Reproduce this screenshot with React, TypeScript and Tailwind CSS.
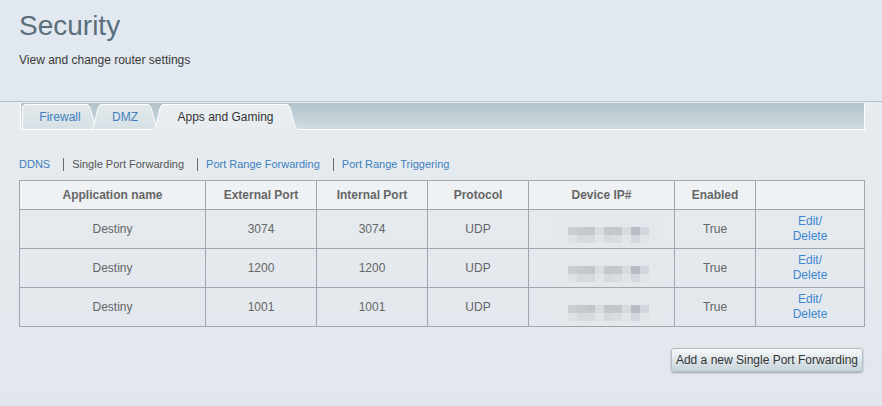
import React from "react";

type Rule = {
  app: string;
  ext: string;
  int: string;
  proto: string;
  enabled: string;
};

const rules: Rule[] = [
  { app: "Destiny", ext: "3074", int: "3074", proto: "UDP", enabled: "True" },
  { app: "Destiny", ext: "1200", int: "1200", proto: "UDP", enabled: "True" },
  { app: "Destiny", ext: "1001", int: "1001", proto: "UDP", enabled: "True" },
];

// masked address: two rows of mosaic blocks
const maskTop = ["#c9ced3", "#c5cacf", "#c2c7cc", "#d8dde2", "#c3c8cd", "#c3c8cd", "#d6dbe0", "#b8bcc2", "#d1d7dd"];
const maskBottom = ["#dde2e6", "#d5dadf", "#d5dadf", "#e0e5e9", "#d5dae0", "#d8dde2", "#e0e5e9", "#d3d8de", "#e0e5e9"];

function MaskedIp() {
  return (
    <div className="ml-[26px] mt-[9px] inline-flex flex-col bg-[#e3e8ec] px-[13px] pb-[4px] pt-[8px] align-top">
      <div className="flex">
        {maskTop.map((c, i) => (
          <div key={i} className="h-[8px] w-[9px]" style={{ backgroundColor: c }} />
        ))}
      </div>
      <div className="flex">
        {maskBottom.map((c, i) => (
          <div key={i} className="h-[8px] w-[9px]" style={{ backgroundColor: c }} />
        ))}
      </div>
    </div>
  );
}

type TabProps = {
  label: string;
  width: number;
  active?: boolean;
  first?: boolean;
  className?: string;
};

function Tab({ label, width, active, first, className }: TabProps) {
  const h = 25;
  const w = width;
  const d = first
    ? `M0.5,${h} L0.5,4 Q0.5,0.5 4,0.5 L${w - 11},0.5 C${w - 6},0.5 ${w - 5},${h} ${w},${h}`
    : `M0,${h} C5,${h} 5,0.5 10,0.5 L${w - 11},0.5 C${w - 6},0.5 ${w - 5},${h} ${w},${h}`;
  const gid = `tabfill-${label.replace(/\s/g, "")}`;
  return (
    <div
      className={`relative flex h-[25px] items-center justify-center ${active ? "z-10" : ""} ${className ?? ""}`}
      style={{ width }}
    >
      <svg className="absolute inset-0" width={w} height={h + 1} viewBox={`0 0 ${w} ${h + 1}`}>
        <defs>
          <linearGradient id={gid} x1="0" y1="0" x2="0" y2="1">
            <stop offset="0" stopColor={active ? "#e9eef1" : "#e2e9ec"} />
            <stop offset="1" stopColor={active ? "#e8edf1" : "#d6e0e4"} />
          </linearGradient>
        </defs>
        <path d={`${d} Z`} fill={`url(#${gid})`} />
        <path d={d} fill="none" stroke="#ffffff" strokeWidth="1" />
        {active && <rect x="0" y={h - 1} width={w} height="2" fill="#e8edf1" />}
      </svg>
      <span className={`relative text-[12px] ${active ? "text-[#333333]" : "text-[#3f7fbf]"}`}>
        {label}
      </span>
    </div>
  );
}

function Sep() {
  return <span className="mx-[8px] ml-[13px] inline-block h-[13px] w-px bg-[#6b6b6b]" />;
}

export default function App() {
  return (
    <div
      className="h-[406px] w-[882px] overflow-hidden bg-gradient-to-b from-[#e8edf1] to-[#e1e7ec]"
      style={{ fontFamily: '"Liberation Sans", Arial, sans-serif' }}
    >
      {/* page heading */}
      <div className="h-[102px] border-b border-[#b9c1c8] bg-[#e1e8ef] px-[19px] pt-[10px]">
        <h1 className="text-[28px] leading-[32px] text-[#5a6e7c]">Security</h1>
        <p className="mt-[10px] text-[12px] leading-[16px] text-[#3a3a3a]">
          View and change router settings
        </p>
      </div>

      {/* section tabs */}
      <div className="ml-[20px] mt-px flex h-[27px] w-[845px] items-end border-x border-b border-white bg-gradient-to-b from-[#b1c2ca] to-[#d0dde1] pl-px">
        <Tab label="Firewall" width={76} first />
        <Tab label="DMZ" width={68} className="-ml-[7px]" />
        <Tab label="Apps and Gaming" width={145} active className="-ml-[6px]" />
      </div>

      {/* sub navigation */}
      <div className="ml-[19px] mt-[27px] flex items-center text-[11px] leading-[14px]">
        <span className="text-[#3f7fbf]">DDNS</span>
        <Sep />
        <span className="text-[#555555]">Single Port Forwarding</span>
        <Sep />
        <span className="text-[#3f7fbf]">Port Range Forwarding</span>
        <Sep />
        <span className="text-[#3f7fbf]">Port Range Triggering</span>
      </div>

      {/* rules table */}
      <table className="ml-[19px] mt-[9px] w-[845px] table-fixed border-collapse text-center text-[12px] text-[#666666]">
        <colgroup>
          <col className="w-[186px]" />
          <col className="w-[111px]" />
          <col className="w-[111px]" />
          <col className="w-[101px]" />
          <col className="w-[146px]" />
          <col className="w-[81px]" />
          <col className="w-[109px]" />
        </colgroup>
        <thead>
          <tr className="h-[29px] bg-[#eef2f5]">
            {["Application name", "External Port", "Internal Port", "Protocol", "Device IP#", "Enabled", ""].map(
              (h, i) => (
                <th key={i} className="border border-[#9ea7ae] p-0 font-bold">
                  {h}
                </th>
              )
            )}
          </tr>
        </thead>
        <tbody>
          {rules.map((r, i) => (
            <tr key={i} className="h-[39px]">
              <td className="border border-[#9ea7ae] p-0">{r.app}</td>
              <td className="border border-[#9ea7ae] p-0">{r.ext}</td>
              <td className="border border-[#9ea7ae] p-0">{r.int}</td>
              <td className="border border-[#9ea7ae] p-0">{r.proto}</td>
              <td className="h-[39px] border border-[#9ea7ae] p-0 text-left align-top leading-none">
                <MaskedIp />
              </td>
              <td className="border border-[#9ea7ae] p-0">{r.enabled}</td>
              <td className="border border-[#9ea7ae] p-0 leading-[15px] text-[#3f86d0]">
                <div>Edit/</div>
                <div>Delete</div>
              </td>
            </tr>
          ))}
        </tbody>
      </table>

      <div className="mr-[19px] mt-[21px] flex justify-end">
        <button className="h-[24px] w-[192px] rounded-[3px] border border-[#b4bec5] bg-gradient-to-b from-[#f7f9fa] to-[#c6d3da] text-[12px] text-[#333333] shadow-[0_1px_2px_rgba(0,0,0,0.3)]">
          Add a new Single Port Forwarding
        </button>
      </div>
    </div>
  );
}
